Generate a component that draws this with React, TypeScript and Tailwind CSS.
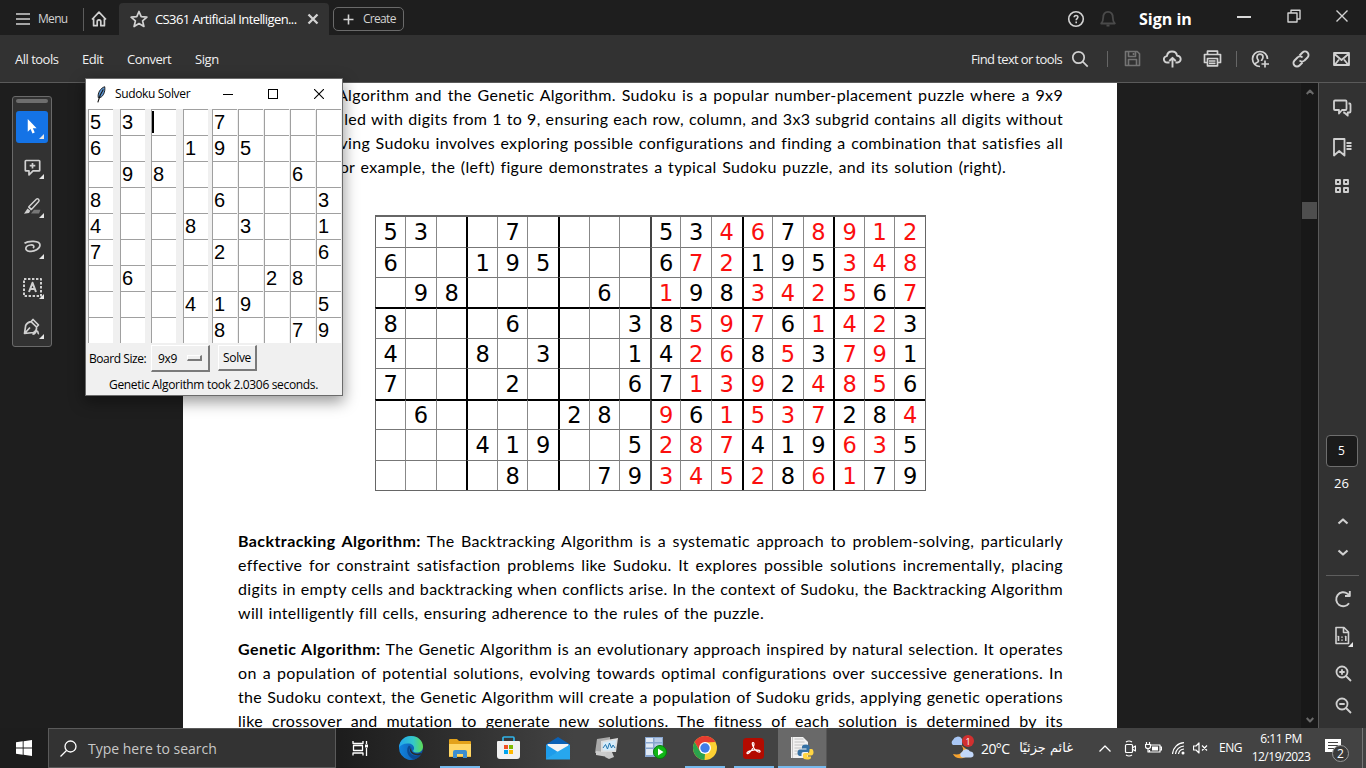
import React from "react";

const PUZZLE = [
  "53..7....",
  "6..195...",
  ".98....6.",
  "8...6...3",
  "4..8.3..1",
  "7...2...6",
  ".6....28.",
  "...419..5",
  "....8..79",
];
const SOLUTION = [
  "534678912",
  "672195348",
  "198342567",
  "859761423",
  "426853791",
  "713924856",
  "961537284",
  "287419635",
  "345286179",
];

type IconProps = { className: string; box?: string; sw?: number; children: React.ReactNode };
function Icon({ className, box = "0 0 18 18", sw = 1.6, children }: IconProps) {
  return (
    <svg viewBox={box} className={`block shrink-0 ${className}`} fill="none" stroke="currentColor" strokeWidth={sw} strokeLinejoin="round">
      {children}
    </svg>
  );
}

function TabBar() {
  return (
    <header className="flex h-[35px] shrink-0 bg-[#1e1e1e] text-[#d2d2d2]">
      <div className="flex w-[83px] items-center pt-[3px]">
        <Icon className="ml-[15px] h-[14px] w-[16px]" box="0 0 16 14" sw={1.7}>
          <path d="M1 2h14M1 7h14M1 12h14" />
        </Icon>
        <span className="ml-[7px] whitespace-nowrap text-[12px] tracking-[-0.7px]">Menu</span>
      </div>
      <div className="mt-[8px] h-[23px] w-px bg-[#5c5c5c]" />
      <Icon className="mt-[10px] ml-[6px] h-[18px] w-[18px]" sw={1.7}>
        <path d="M2 9.5 9 2.200l7 7.300M3.600 8.500v7.200h3.600v-4a1.800 1.800 0 0 1 3.600 0v4h3.600V8.500" />
      </Icon>
      <div className="mt-[3px] ml-[11px] flex w-[210px] items-center rounded-t-[4px] bg-[#323232]">
        <Icon className="ml-[11px] h-[18px] w-[18px]" sw={1.7}>
          <path d="m9 1.500 2.200 5.200 5.700.5-4.300 3.700 1.300 5.600L9 13.600l-4.900 2.900 1.300-5.600L1.100 7.200l5.700-.5z" />
        </Icon>
        <span className="mt-px ml-[7px] w-[144px] whitespace-nowrap text-[13px] tracking-[-0.6px] text-white">CS361 Artificial Intelligen...</span>
        <Icon className="ml-[8px] h-[12px] w-[12px]" box="0 0 12 12" sw={2.300}>
          <path d="m1.500 1.500 9 9m0-9-9 9" />
        </Icon>
      </div>
      <div className="mt-[7px] ml-[4px] flex h-[24px] w-[71px] items-center rounded-[5px] border border-[#6a6a6a]">
        <Icon className="ml-[9px] h-[11px] w-[11px]" box="0 0 11 11" sw={1.6}>
          <path d="M5.500.5v10M.5 5.500h10" />
        </Icon>
        <span className="ml-[9px] whitespace-nowrap text-[12px] tracking-[-0.7px]">Create</span>
      </div>
      <div className="flex-1" />
      <div className="flex w-[299px]">
        <Icon className="mt-[10px] h-[18px] w-[18px]" sw={1.6}>
          <circle cx="9" cy="9" r="7.300" />
          <path d="M7.200 7.300c0-2.500 3.700-2.400 3.700-.2 0 1.500-1.700 1.500-1.700 3.100M9.200 11.500v1.700" />
        </Icon>
        <Icon className="mt-[10px] ml-[15px] h-[18px] w-[16px] text-[#4a4a4a]" box="0 0 16 18" sw={1.8}>
          <path d="M1.200 13.500c1.600-1.500 2-3 2-6C3.200 4 5 1.800 8 1.800s4.800 2.200 4.800 5.700c0 3 .4 4.500 2 6zM6.500 15.700h3" />
        </Icon>
        <span className="mt-[8px] ml-[23px] w-[60px] whitespace-nowrap text-[16px] leading-[22px] font-bold text-white">Sign in</span>
        <div className="mt-[16px] ml-[38px] h-[2px] w-[14px] bg-[#d8d8d8]" />
        <Icon className="mt-[9px] ml-[36px] h-[14px] w-[14px]" box="0 0 14 14" sw={1.4}>
          <path d="M1 4h9v9H1zM4 4V1.200h9V10h-3" />
        </Icon>
        <Icon className="mt-[10px] ml-[35px] h-[12px] w-[12px]" box="0 0 12 12" sw={1.4}>
          <path d="m.5.500 11 11m0-11-11 11" />
        </Icon>
      </div>
    </header>
  );
}

function ToolBar() {
  return (
    <nav className="flex h-[48px] shrink-0 items-center border-b border-[#5a5a5a] bg-[#323232] text-[13px] text-[#f0f0f0]">
      <span className="mt-[2px] ml-[15px] w-[67px] whitespace-nowrap tracking-[-0.5px]">All tools</span>
      <span className="mt-[2px] w-[45px] whitespace-nowrap tracking-[-0.5px]">Edit</span>
      <span className="mt-[2px] w-[68px] whitespace-nowrap tracking-[-0.5px]">Convert</span>
      <span className="mt-[2px] w-[60px] whitespace-nowrap tracking-[-0.4px]">Sign</span>
      <div className="flex-1" />
      <div className="flex w-[395px] items-center text-[#d2d2d2]">
        <span className="mt-[2px] w-[100px] whitespace-nowrap tracking-[-0.62px] text-[#f0f0f0]">Find text or tools</span>
        <Icon className="h-[18px] w-[18px]" sw={1.700}>
          <circle cx="7.500" cy="7.500" r="5.700" />
          <path d="m11.700 11.700 5 5" />
        </Icon>
        <div className="ml-[18px] h-[16px] w-px bg-[#666]" />
        <Icon className="ml-[16px] h-[17px] w-[17px] text-[#747474]" box="0 0 17 17" sw={1.600}>
          <path d="M1.500 1.500h11.700l2.300 2.300v11.700h-14zM4.500 1.500v5h7v-5M4.500 15.500v-6h8v6M9.500 3v2" />
        </Icon>
        <Icon className="ml-[22px] h-[18px] w-[19px]" box="0 0 19 18" sw={1.900}>
          <path d="M6.500 12.500H4.300a3.200 3.200 0 0 1-.4-6.400C4.300 3.300 6.500 1.500 9 1.500c2.700 0 4.700 1.800 5 4.200a3.300 3.300 0 0 1 .5 6.800h-2M9.500 17.500V8M6.300 11l3.200-3.200 3.200 3.200" />
        </Icon>
        <Icon className="ml-[21px] h-[17px] w-[19px]" box="0 0 19 17" sw={1.700}>
          <path d="M4.500 4.500V1.200h10v3.300M4.500 12.500H1.500v-8h16v8h-3M4.500 8.500h10v7.300h-10zM6 11h6.500M6 13.300h6.500" />
        </Icon>
        <div className="ml-[14px] h-[16px] w-px bg-[#666]" />
        <Icon className="ml-[14px] h-[18px] w-[19px]" box="0 0 19 18" sw={1.700}>
          <path d="M16.500 9a7.500 7.500 0 1 0-7.500 7.500M4 14.500c.5-2.500 3.500-1.500 3.500-3.500 0-1-1.500-1.700-1.500-4 0-3.800 6-3.800 6 0 0 2.300-1.500 2.500-1.500 4M14 10.500v7M10.500 14h7.500" />
        </Icon>
        <Icon className="ml-[22px] h-[18px] w-[18px]" sw={1.900}>
          <path d="m7.500 5.500 3-3a3.300 3.300 0 0 1 5 5l-3 3a3.300 3.300 0 0 1-5 0M10.500 12.500l-3 3a3.300 3.300 0 0 1-5-5l3-3a3.300 3.300 0 0 1 5 0" />
        </Icon>
        <Icon className="ml-[23px] h-[14px] w-[17px]" box="0 0 17 14" sw={1.800}>
          <path d="M1 1h15v12H1zM1.500 2 8.500 8l7-6M2 12.500l4-5M15 12.500l-4-5" />
        </Icon>
      </div>
    </nav>
  );
}

function Corner() {
  return (
    <svg viewBox="0 0 5 5" className="absolute right-[4px] bottom-[4px] h-[5px] w-[5px]">
      <path d="M5 0v5H0z" fill="#e6e6e6" />
    </svg>
  );
}

function ToolRail() {
  const cell = "relative flex h-[32px] w-[32px] items-center justify-center rounded-[3px]";
  return (
    <aside className="mt-[13px] ml-[12px] flex h-[251px] w-[40px] flex-col items-center rounded-[3px] border border-[#6a6a6a] bg-[#323232] text-[#d0d0d0]">
      <div className="mt-[2px] h-[4px] w-[32px] rounded-[2px] bg-[#6e6e6e]" />
      <div className={`${cell} mt-[8px] bg-[#1473e6]`}>
        <svg viewBox="0 0 12 18" className="h-[17px] w-[12px]">
          <path d="M1.500 0v13.500l3-2.800 2 4.700 2.400-1-2-4.600h4z" fill="#fff" />
        </svg>
        <Corner />
      </div>
      <div className={`${cell} mt-[8px]`}>
        <Icon className="h-[17px] w-[17px]" box="0 0 17 17" sw={1.700}>
          <path d="M2 1.500h13q.7 0 .7.700v9q0 .7-.7.700H9l-4 4v-4H2q-.7 0-.7-.7v-9q0-.7.700-.7zM8.500 3.900v5.600M5.700 6.700h5.600" />
        </Icon>
        <Corner />
      </div>
      <div className={`${cell} mt-[7px]`}>
        <Icon className="h-[18px] w-[18px]" sw={1.500}>
          <path d="M8 16.500h8l1.500-3.800H11z" fill="#777" stroke="none" />
          <path d="m5.800 9.800 7.500-7.600q1.100-1 2.200 0t.2 2.400l-7.300 7.900zM5.500 10l3 3" />
          <path d="m4.500 11.500 2.800 2.300-1.300 2.200-5 .8z" fill="currentColor" stroke="none" />
        </Icon>
        <Corner />
      </div>
      <div className={`${cell} mt-[9px]`}>
        <Icon className="h-[14px] w-[19px]" box="0 0 19 14" sw={1.700}>
          <path d="M1.500 3.200C5 .7 17 .2 17 5c0 3.800-5.500 7-10.500 6.300C1 10.500 2 5.500 7.500 5c3-.3 4.500 1.200 2.500 3" />
        </Icon>
        <Corner />
      </div>
      <div className={`${cell} mt-[8px]`}>
        <Icon className="h-[19px] w-[19px]" box="0 0 19 19" sw={2}>
          <path d="M1 1h17v17H1z" strokeDasharray="2.400 1.600" />
          <path d="M6 14 9.500 4.800 13 14M7.200 11h4.600" />
        </Icon>
        <Corner />
      </div>
      <div className={`${cell} mt-[8px]`}>
        <Icon className="h-[18px] w-[19px]" box="0 0 19 18" sw={1.700}>
          <path d="m10 1.500 5.500 5.500-2 2q.5 4-3 5.500L1.500 15.500l1.200-8.200Q4 4.500 8 3.700zM8 3.700 13.500 9M2 15l5-5.500M9.500 16c3 .5 3-3 4.500-3s.5 3 2 2.500" />
        </Icon>
        <Corner />
      </div>
    </aside>
  );
}

function Line({ children, pad = "pl-0" }: { children: React.ReactNode; pad?: string }) {
  return <div className={`h-[24px] whitespace-nowrap [text-align-last:justify] ${pad}`}>{children}</div>;
}

function Figure() {
  return (
    <div className="mt-[36px] ml-[137px] grid h-[276px] w-[551px] grid-cols-[30.2px_repeat(17,minmax(0,1fr))] grid-rows-[29.6px_repeat(8,minmax(0,1fr))] border-t-2 border-r border-b border-[#666] font-['DejaVu_Sans',sans-serif] text-[22.5px] leading-none tracking-normal">
      {PUZZLE.map((row, r) =>
        (row + SOLUTION[r]).split("").map((d, c) => {
          const given = c < 9 || row[c - 9] !== ".";
          const left = c === 0 ? "border-l border-l-[#666]" : c === 9 ? "border-l-2 border-l-[#444]" : c % 3 === 0 ? "border-l-2 border-l-black" : "border-l border-l-[#888]";
          const top = r === 0 ? "" : r % 3 === 0 ? "border-t-2 border-t-black" : "border-t border-t-[#777]";
          return (
            <div key={`${r}-${c}`} className={`flex items-center justify-center pt-px ${left} ${top} ${given ? "text-black" : "text-[#fb0e0e]"}`}>
              {d === "." ? "" : d}
            </div>
          );
        }),
      )}
    </div>
  );
}

function Document() {
  return (
    <article className="h-[645px] w-[934px] overflow-hidden bg-white pr-[54px] pl-[55px] font-['Lato',sans-serif] text-[16px] leading-[24px] tracking-[0.32px] text-black [font-variant-ligatures:none]">
      <Line pad="pl-[99px]">Algorithm and the Genetic Algorithm. Sudoku is a popular number-placement puzzle where a 9x9</Line>
      <Line pad="pl-[92px]">filled with digits from 1 to 9, ensuring each row, column, and 3x3 subgrid contains all digits without</Line>
      <Line pad="pl-[79px]">Solving Sudoku involves exploring possible configurations and finding a combination that satisfies all</Line>
      <div className="w-[768px]">
        <Line pad="pl-[93px]">For example, the (left) figure demonstrates a typical Sudoku puzzle, and its solution (right).</Line>
      </div>
      <Figure />
      <div className="mt-[38px]">
        <Line><b className="tracking-[0.42px]">Backtracking Algorithm:</b> The Backtracking Algorithm is a systematic approach to problem-solving, particularly</Line>
        <Line>effective for constraint satisfaction problems like Sudoku. It explores possible solutions incrementally, placing</Line>
        <Line>digits in empty cells and backtracking when conflicts arise. In the context of Sudoku, the Backtracking Algorithm</Line>
        <div className="w-[526px]">
          <Line>will intelligently fill cells, ensuring adherence to the rules of the puzzle.</Line>
        </div>
      </div>
      <div className="mt-[12px]">
        <Line><b className="tracking-[0.45px]">Genetic Algorithm:</b> The Genetic Algorithm is an evolutionary approach inspired by natural selection. It operates</Line>
        <Line>on a population of potential solutions, evolving towards optimal configurations over successive generations. In</Line>
        <Line>the Sudoku context, the Genetic Algorithm will create a population of Sudoku grids, applying genetic operations</Line>
        <Line>like crossover and mutation to generate new solutions. The fitness of each solution is determined by its</Line>
      </div>
    </article>
  );
}

function ScrollBar() {
  return (
    <div className="flex w-[17px] flex-col items-center bg-[#181818] text-[#6a6a6a]">
      <Icon className="mt-[6px] h-[6px] w-[8px]" box="0 0 8 6" sw={2}><path d="m.7 5 3.300-3.500L7.300 5" /></Icon>
      <div className="mt-[107px] h-[17px] w-[15px] bg-[#4e4e4e]" />
      <div className="flex-1" />
      <Icon className="mb-[5px] h-[6px] w-[8px]" box="0 0 8 6" sw={2}><path d="m.7 1 3.300 3.500L7.300 1" /></Icon>
    </div>
  );
}

function RightRail() {
  return (
    <aside className="flex w-[48px] flex-col items-center border-l border-[#5a5a5a] bg-[#323232] text-[#d0d0d0]">
      <Icon className="mt-[16px] h-[18px] w-[19px]" box="0 0 19 18" sw={1.800}>
        <path d="M2 1.500h10.500q1 0 1 1V10q0 1-1 1H9l-3 3.500V11H2q-1 0-1-1V2.500q0-1 1-1zM15.500 4.500h1q1 0 1 1v7q0 1-1 1h-1.800v3.200l-3.500-3.200h-1" />
      </Icon>
      <Icon className="mt-[21px] h-[19px] w-[19px]" box="0 0 19 19" sw={1.800}>
        <path d="M1 1h10.500v16.500L6.200 13 1 17.500zM13.500 5h5M13.500 8h5M13.500 11h5" />
      </Icon>
      <Icon className="mt-[22px] mr-[1px] h-[14px] w-[14px]" box="0 0 14 14" sw={1.900}>
        <path d="M1 1h4v4H1zM9 1h4v4H9zM1 9h4v4H1zM9 9h4v4H9z" />
      </Icon>
      <div className="mt-[242px] mr-[2px] flex h-[32px] w-[32px] items-center justify-center rounded-[4px] border border-[#6e6e6e] bg-[#1b1b1b] text-[12px] text-white">5</div>
      <div className="mt-[7px] mr-[2px] text-[13px] leading-[18px] text-white">26</div>
      <Icon className="mt-[25px] h-[8px] w-[12px]" box="0 0 12 8" sw={2.200}><path d="m1.500 6.500 4.500-4 4.500 4" /></Icon>
      <Icon className="mt-[24px] h-[8px] w-[12px]" box="0 0 12 8" sw={2.200}><path d="m1.500 1.500 4.500 4 4.500-4" /></Icon>
      <div className="mt-[18px] h-px w-[33px] bg-[#5e5e5e]" />
      <Icon className="mt-[14px] h-[18px] w-[18px]" sw={1.900}>
        <path d="M15 13.200A7 7 0 1 1 13.500 3.700l2 2M15.800 1v5H11" />
      </Icon>
      <div className="relative mt-[18px] h-[20px] w-[18px]">
        <Icon className="h-[19px] w-[16px]" box="0 0 16 19" sw={1.600}>
          <path d="M2 1.500h8l4.500 4.500v11.500H2zM9.500 1.500V6.500h5M4.500 10v5M11.800 10v5M8 10.500v1.200M8 13.500v1.200M3.700 10.800l.8-.6M11 10.800l.8-.6" />
        </Icon>
        <svg viewBox="0 0 5 5" className="absolute -right-px -bottom-px h-[5px] w-[5px]"><path d="M5 0v5H0z" fill="#e6e6e6" /></svg>
      </div>
      <Icon className="mt-[19px] ml-[2px] h-[17px] w-[17px]" box="0 0 17 17" sw={1.800}>
        <circle cx="7" cy="7" r="5.500" /><path d="m11 11 5 5M7 4.300v5.400M4.300 7h5.400" />
      </Icon>
      <Icon className="mt-[15px] ml-[2px] h-[17px] w-[17px]" box="0 0 17 17" sw={1.800}>
        <circle cx="7" cy="7" r="5.500" /><path d="m11 11 5 5M4.300 7h5.400" />
      </Icon>
    </aside>
  );
}

function SolverWindow() {
  return (
    <section className="absolute top-[79px] left-[86px] flex h-[316px] w-[256px] flex-col bg-[#f0f0f0] text-[12px] text-black shadow-[0_0_0_1px_#6b6b6b,0_5px_14px_2px_rgba(0,0,0,0.4)]">
      <div className="flex h-[30px] shrink-0 items-center bg-white">
        <svg viewBox="0 0 12 18" className="ml-[10px] h-[17px] w-[11px]">
          <path d="M9.500.5C5 2 1.500 7 2.500 12.500 7.500 13 10.500 6 9.500.5z" fill="#5b93cf" stroke="#111" strokeWidth="1" />
          <path d="M8 3.500Q4 9 2 17.500" stroke="#111" strokeWidth="1.200" fill="none" />
        </svg>
        <span className="ml-[8px] w-[108px] whitespace-nowrap tracking-[-0.35px]">Sudoku Solver</span>
        <div className="h-px w-[10px] bg-black" />
        <div className="ml-[35px] h-[10px] w-[10px] border border-black" />
        <Icon className="ml-[36px] h-[10px] w-[10px]" box="0 0 10 10" sw={1.100}><path d="m0 0 10 10M10 0 0 10" /></Icon>
      </div>
      <div className="grid h-[234px] shrink-0 grid-cols-[32px_31px_32px_29px_26px_26px_26px_26px_26px] grid-rows-[repeat(9,26px)] pl-[2px] font-['Liberation_Sans',Arial,sans-serif] text-[20px] leading-[24px]">
        {PUZZLE.map((row, r) =>
          row.split("").map((d, c) => (
            <div key={`${r}-${c}`} className="flex h-[26px] w-[25px] border-t border-l border-[#a0a0a0] bg-white pl-px">
              {r === 0 && c === 2 ? <div className="mt-px -ml-px h-[22px] w-[2px] bg-black" /> : d === "." ? "" : d}
            </div>
          )),
        )}
      </div>
      <div className="flex h-[30px] shrink-0 items-start pt-[2px]">
        <span className="ml-[3px] w-[62px] pt-[5px] leading-[18px] whitespace-nowrap tracking-[-0.45px]">Board Size:</span>
        <div className="flex h-[27px] w-[59px] items-center border-t border-r-2 border-b-2 border-l border-t-white border-r-[#7a7a7a] border-b-[#7a7a7a] border-l-white">
          <span className="mt-[2px] ml-[6px] w-[29px] tracking-[-0.3px]">9x9</span>
          <div className="h-[6px] w-[15px] border-t border-r-2 border-b-2 border-l border-t-white border-r-[#7a7a7a] border-b-[#7a7a7a] border-l-white" />
        </div>
        <div className="ml-[8px] flex h-[26px] w-[39px] items-center justify-center border-t border-r-2 border-b-2 border-l border-t-white border-r-[#7a7a7a] border-b-[#7a7a7a] border-l-white pt-px tracking-[-0.3px]">Solve</div>
      </div>
      <div className="mt-[3px] ml-[23px] w-[210px] leading-[18px] whitespace-nowrap tracking-[-0.33px]">Genetic Algorithm took 2.0306 seconds.</div>
    </section>
  );
}

const slot = "flex h-[40px] w-[49px] shrink-0 items-center justify-center";

function TaskBar() {
  return (
    <footer className="flex h-[40px] shrink-0 bg-linear-to-r from-[#1d1d1d] from-25% to-[#434343] to-42% text-white">
      <div className="flex w-[48px] items-center justify-center">
        <svg viewBox="0 0 16 16" className="h-[16px] w-[16px]" fill="#fff"><path d="M0 2.300 6.700 1.300v6.200H0zM7.600 1.200 16 0v7.500H7.600zM0 8.400h6.700v6.300L0 13.700zM7.600 8.400H16V16l-8.400-1.200z" /></svg>
      </div>
      <div className="flex w-[288px] items-center border border-[#5a5a5a] bg-[#333]">
        <Icon className="ml-[11px] h-[17px] w-[17px]" box="0 0 17 17" sw={1.300}><circle cx="10.500" cy="6.500" r="5.500" /><path d="m6.500 10.500-6 6" /></Icon>
        <span className="ml-[11px] whitespace-nowrap text-[14px] text-[#c8c8c8]">Type here to search</span>
      </div>
      <div className="flex w-[50px] items-center justify-center pr-[2px]">
        <Icon className="h-[16px] w-[17px]" box="0 0 17 16" sw={1.300}><path d="M1 1v2.500h10V1M1.500 5.500h9v5h-9zM1 15.500V13h10v2.500M14.500 1v3M14.500 8v8" /><path d="M13 4.500h3v3h-3z" fill="#fff" stroke="none" /></Icon>
      </div>
      <div className={slot}>
        <svg viewBox="0 0 24 24" className="h-[24px] w-[24px]">
          <defs>
            <linearGradient id="e1" x1="0" x2="1"><stop offset="0" stopColor="#22a6ee" /><stop offset=".6" stopColor="#35c8c8" /><stop offset="1" stopColor="#5edc52" /></linearGradient>
            <linearGradient id="e2" x1="0" x2="1"><stop offset="0" stopColor="#1185e0" /><stop offset="1" stopColor="#0d4ea0" /></linearGradient>
          </defs>
          <path d="M0 12A12 12 0 0 1 12 0a12 12 0 0 1 10 18.500A12 12 0 0 1 0 12z" fill="url(#e2)" />
          <path d="M0 11.500C.5 4.500 5.500 0 12 0c7 0 12 5 12 10.500 0 4-2.800 6-6 6-3.500 0-4.500-1.500-3.500-2.500C16 12 14.500 8 10 7.500 5 7 1.500 9 0 11.500z" fill="url(#e1)" />
          <path d="M10 9.500C6.500 13 8 21 15 23.500c3-.7 5.500-2.600 7-5-3.500 2-9 1.500-11-2-1.200-2.200-.5-4 1-5.500z" fill="#0b4a92" />
          <path d="M12.500 11.500c-1 2 .5 6.500 6 6.300 2.500-.1 4-.8 4.500-1.300l-1 2c-1.500 1-8 1.700-10.500-2.500-1-2-.3-3.500 1-4.500z" fill="#2b2b2b" />
        </svg>
      </div>
      <div className={`${slot} relative`}>
        <svg viewBox="0 0 22 19" className="h-[19px] w-[22px]">
          <path d="M0 1q0-1 1-1h7l2 2h11q1 0 1 1v15H0z" fill="#e3a21a" />
          <path d="M0 5h22v12.500H0z" fill="#ffd766" />
          <path d="M4 19v-6q0-2 2-2h10q2 0 2 2v6h-4v-4H8v4z" fill="#3c8ed0" />
        </svg>
        <div className="absolute bottom-0 left-[5px] h-[2px] w-[40px] bg-[#76b9ed]" />
      </div>
      <div className={slot}>
        <svg viewBox="0 0 23 24" className="h-[24px] w-[23px]">
          <path d="M6 6V2q0-1 1-1h9q1 0 1 1v4" fill="none" stroke="#31b3e8" strokeWidth="1.700" />
          <path d="M0 6q0-1 1-1h21q1 0 1 1v14q0 3-3 3H3q-3 0-3-3z" fill="#f1f1f1" />
          <path d="M7 9h4v4H7z" fill="#f25022" /><path d="M12 9h4v4h-4z" fill="#7fba00" /><path d="M7 14h4v4H7z" fill="#00a4ef" /><path d="M12 14h4v4h-4z" fill="#ffb900" />
        </svg>
      </div>
      <div className={slot}>
        <svg viewBox="0 0 24 23" className="h-[23px] w-[24px]"><path d="M0 7.500 12 0l12 7.500V12H0z" fill="#0b61b5" /><path d="M1.500 7h21v9h-21z" fill="#f4f4f4" /><path d="M0 7.500 12 15 0 22z" fill="#1d9ceb" /><path d="M24 7.500V22.500H0V21.500z" fill="#27a7ee" /></svg>
      </div>
      <div className={slot}>
        <svg viewBox="0 0 24 22" className="h-[22px] w-[24px]">
          <path d="m2 2 13-2v13L0 16z" fill="#aaa" /><path d="m1 14 12 1v5l-12-2z" fill="#ccc" />
          <path d="m6 4 17-3-2 14H6z" fill="#ddd" /><path d="m8 5.500 13-2.500-1.500 10.500H8z" fill="#d5ecfa" />
          <path d="m8 11 2.500-3.500L12.500 12l2-6 2 5 1.500-3 2 3" stroke="#2275ad" fill="none" /><path d="M12 15h5l2 5-5 2-4-2z" fill="#c8c8c8" />
        </svg>
      </div>
      <div className={slot}>
        <svg viewBox="0 0 22 22" className="h-[22px] w-[22px]">
          <path d="M0 0h18v20H0z" fill="#87a5cf" /><path d="M1 1h7v4H1zM1 6.500h7v4H1zM1 12h7v6H1z" fill="#e0e9f5" /><path d="M9.500 1H17v4H9.500zM9.500 6.500H17v4H9.500zM9.500 12H17v6H9.500z" fill="#b5c9e6" />
          <circle cx="15" cy="15" r="6.500" fill="#10b616" stroke="#087a0c" /><path d="M13 11.500v7l5.500-3.500z" fill="#fff" />
        </svg>
      </div>
      <div className={`${slot} relative`}>
        <svg viewBox="0 0 24 24" className="h-[24px] w-[24px]">
          <circle cx="12" cy="12" r="12" fill="#fdd033" />
          <path d="M1.600 6A12 12 0 0 1 22.400 6L12 6.500 6.800 15z" fill="#e53c30" />
          <path d="M1.600 6 6.800 15l5.200 3-.5 6A12 12 0 0 1 1.600 6z" fill="#2ba24c" />
          <path d="M12 24 17.200 15 12 17.500z" fill="#fdd033" />
          <circle cx="12" cy="12" r="6" fill="#fff" /><circle cx="12" cy="12" r="4.700" fill="#3f7de8" />
        </svg>
        <div className="absolute bottom-0 left-[5px] h-[2px] w-[40px] bg-[#76b9ed]" />
      </div>
      <div className={`${slot} relative`}>
        <svg viewBox="0 0 21 21" className="h-[21px] w-[21px]">
          <rect width="21" height="21" rx="3.500" fill="#b30b00" />
          <path d="M10 4.500c1.800 0 1 4-1 7s-4.500 5-5 3.800C3.500 14 8 12 12 11.800s5.500 1 5 2-3.500 0-5.500-2.800S8.500 4.500 10 4.500z" fill="none" stroke="#fff" strokeWidth="1.200" />
        </svg>
        <div className="absolute bottom-0 left-[5px] h-[2px] w-[40px] bg-[#76b9ed]" />
      </div>
      <div className="relative flex h-[40px] w-[49px] shrink-0 items-center justify-center border-r border-[#555] bg-[#696969]">
        <svg viewBox="0 0 24 24" className="h-[24px] w-[24px]">
          <path d="M1 1h12l5 5v16H1z" fill="#f2f2f2" /><path d="M2.500 1v21M4.500 3h9M4.500 6h10M4.500 9h10M4.500 12h8M4.500 15h6M4.500 18h6" stroke="#b5b5b5" strokeWidth=".8" />
          <path d="M16 8.500c-3 0-4 1-4 2.500v1.500h4.500v1H10c-2 0-2.500 2-2.500 3.500s.8 3 2.500 3h1.500v-2q0-2 2-2h4q2 0 2-2v-3q0-2.500-3.500-2.500z" fill="#3571a4" />
          <path d="M19.500 13h2c1.700 0 2 2 2 3.500s-.7 3-2.500 3h-4v1h4v1q0 2-4 2t-4-2.500v-2.500q0-1.500 2-1.500h3q1.500 0 1.500-2z" fill="#ffd542" />
        </svg>
        <div className="absolute bottom-0 left-0 h-[2px] w-[48px] bg-[#76b9ed]" />
      </div>
      <div className="flex-1" />
      <div className="flex w-[418px] items-center">
        <div className="relative h-[24px] w-[26px]">
          <svg viewBox="0 0 26 24" className="h-[24px] w-[26px]">
            <path d="M13 9c5 5 1 11-8 9 2 6 14 6 17-2z" fill="#f6a330" />
            <path d="M5 9a3 3 0 0 1 0-5 5 5 0 0 1 9-1v6z" fill="#a9c7f5" /><path d="M14 21.500a3 3 0 0 1 0-5.500 4.500 4.500 0 0 1 8-.5 3 3 0 0 1 1 6z" fill="#c3d8fa" />
          </svg>
          <span className="absolute -top-px left-[14px] flex h-[12px] w-[12px] items-center justify-center rounded-full bg-[#d1302f] text-[9px] leading-none">1</span>
        </div>
        <span className="ml-[7px] w-[38px] whitespace-nowrap text-[14px] tracking-[-0.6px]">20°C</span>
        <span dir="rtl" className="w-[54px] whitespace-nowrap text-right font-['DejaVu_Sans',sans-serif] text-[13px]">غائم جزئيًا</span>
        <Icon className="ml-[26px] h-[7px] w-[12px]" box="0 0 12 7" sw={1.300}><path d="m.5 6.500 5.500-5.500 5.500 5.500" /></Icon>
        <Icon className="ml-[13px] h-[17px] w-[12px]" box="0 0 12 17" sw={1.200}><path d="M2.500 4.500h5q1 0 1 1v6q0 1-1 1h-5q-1 0-1-1v-6q0-1 1-1zM9 7.500l2.500-1.500v5L9 9.500M2 2q3-2 6 0M2 15q3 2 6 0" /></Icon>
        <Icon className="ml-[9px] h-[12px] w-[17px]" box="0 0 17 12" sw={1.200}><path d="M6 3h9v7H4.500V8M15 5h1.500v3H15M1.500 0v2.500M4.500 0v2.500M.5 2.500h5v2q0 2-2.500 2T.5 4.500zM3 6.500V10h2" /><path d="M7 4.500h6v4H7z" fill="#fff" stroke="none" /></Icon>
        <Icon className="ml-[10px] h-[13px] w-[13px]" box="0 0 13 13" sw={1.200}><path d="M.5 12A12 12 0 0 1 12 .7M3.500 12A9 9 0 0 1 12 4M6.500 12A6 6 0 0 1 12 7" /><circle cx="11" cy="11" r="1.500" fill="#fff" stroke="none" /></Icon>
        <Icon className="ml-[8px] h-[12px] w-[15px]" box="0 0 15 12" sw={1.200}><path d="M.5 4H3l3-3v10L3 8H.5zM9 3.500l5 5M14 3.500l-5 5" /></Icon>
        <span className="ml-[11px] w-[26px] whitespace-nowrap text-[12px] tracking-[-0.5px]">ENG</span>
        <div className="ml-[4px] flex w-[64px] flex-col text-center text-[12px] leading-[18px] tracking-[-0.5px] whitespace-nowrap">
          <span>6:11 PM</span>
          <span>12/19/2023</span>
        </div>
        <div className="relative ml-[11px] h-[24px] w-[26px]">
          <svg viewBox="0 0 18 17" className="mt-[3px] h-[17px] w-[18px]"><path d="M1 0h16v13h-4v4l-4-4H1z" fill="#fff" /><path d="M4 3.500h10M4 6.500h10M4 9.500h6" stroke="#444" strokeWidth="1.100" /></svg>
          <span className="absolute top-[9px] left-[8px] flex h-[17px] w-[17px] items-center justify-center rounded-full border border-[#999] bg-[#3a3a3a] text-[12px] leading-none">2</span>
        </div>
        <div className="ml-[12px] h-[40px] w-px bg-[#777]" />
      </div>
    </footer>
  );
}

export default function App() {
  return (
    <div className="relative flex h-[768px] w-[1366px] flex-col overflow-hidden bg-[#1e1e1e] font-['Open_Sans','Noto_Sans',sans-serif] [font-stretch:88%]">
      <TabBar />
      <ToolBar />
      <main className="flex h-[645px] shrink-0">
        <div className="w-[183px]"><ToolRail /></div>
        <Document />
        <div className="w-[184px]" />
        <ScrollBar />
        <RightRail />
      </main>
      <TaskBar />
      <SolverWindow />
    </div>
  );
}
